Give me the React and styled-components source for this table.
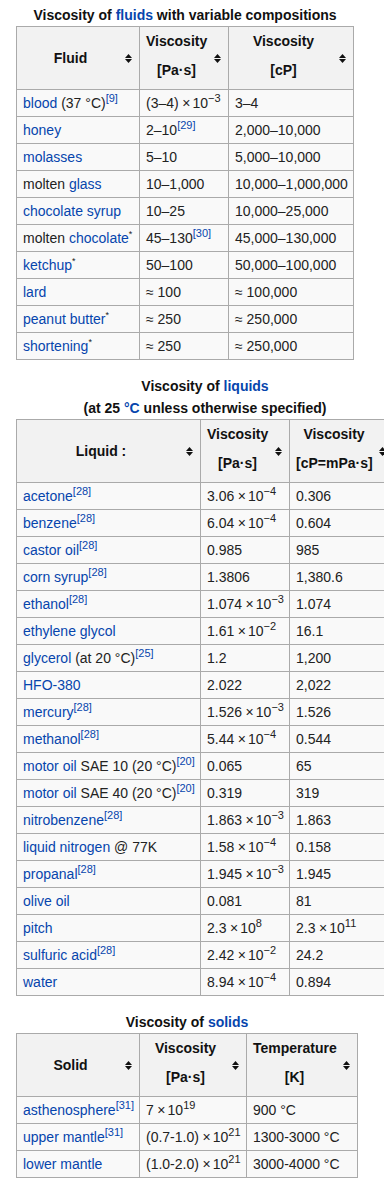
import React from "react";
import styled, { createGlobalStyle } from "styled-components";

const GlobalStyle = createGlobalStyle`
  html, body {
    margin: 0;
    padding: 0;
    overflow-x: hidden;
    background: #ffffff;
  }
  body {
    font-family: "Liberation Sans", Arial, Helvetica, sans-serif;
    font-size: 14px;
    color: #222222;
  }
`;

const Page = styled.div`
  padding: 4px 0 0 16px;
  width: 420px;
`;

const Table = styled.table`
  border-collapse: collapse;
  table-layout: fixed;
  width: ${(p) => p.$width}px;
  background: #f9f9f9;
  border: 1px solid #aaaaaa;
  margin: 0 0 15px 0;
  color: #222222;
`;

const Caption = styled.caption`
  font-weight: bold;
  line-height: 22px;
  text-align: center;
  color: #111111;
`;

const Th = styled.th`
  position: relative;
  background: #f2f2f2;
  border: 1px solid #aaaaaa;
  padding: ${(p) => (p.$multi ? "0 21px 4px 6px" : "2px 21px 2px 6px")};
  line-height: 29px;
  text-align: center;
  vertical-align: middle;
  font-weight: bold;
  color: #111111;
  white-space: nowrap;
`;

const Td = styled.td`
  border: 1px solid #aaaaaa;
  padding: 3px 6px;
  line-height: 20px;
  text-align: left;
  vertical-align: middle;
  white-space: nowrap;
`;

const Link = styled.span`
  color: #0645ad;
`;

const Ref = styled.sup`
  font-size: 11px;
  line-height: 0;
  vertical-align: super;
  color: #0645ad;
`;

const Star = styled.sup`
  font-size: 9px;
  line-height: 0;
  vertical-align: super;
  color: #222222;
`;

const Exp = styled.sup`
  font-size: 11px;
  line-height: 0;
  vertical-align: super;
`;

const Times = styled.span`
  margin-left: 0.25em;
  margin-right: 0.15em;
`;

const SortIcon = styled.svg`
  position: absolute;
  right: 7px;
  top: 50%;
  width: 7px;
  height: 9px;
  margin-top: -4px;
`;

const Sorter = () => (
  <SortIcon viewBox="0 0 7 9" aria-hidden="true">
    <polygon points="0,4 3.5,0 7,4" fill="#111" />
    <polygon points="0,5 7,5 3.5,9" fill="#111" />
  </SortIcon>
);

const Sci = ({ m, e }) => (
  <>
    {m}
    <Times>×</Times>10<Exp>{e}</Exp>
  </>
);

const Header = ({ title, unit }) => (
  <Th $multi={!!unit}>
    {title}
    {unit && (
      <>
        <br />
        {unit}
      </>
    )}
    <Sorter />
  </Th>
);

const fluids = [
  [<><Link>blood</Link> (37 °C)<Ref>[9]</Ref></>, <Sci m="(3–4)" e="−3" />, "3–4"],
  [<Link>honey</Link>, <>2–10<Ref>[29]</Ref></>, "2,000–10,000"],
  [<Link>molasses</Link>, "5–10", "5,000–10,000"],
  [<>molten <Link>glass</Link></>, "10–1,000", "10,000–1,000,000"],
  [<Link>chocolate syrup</Link>, "10–25", "10,000–25,000"],
  [<>molten <Link>chocolate</Link><Star>*</Star></>, <>45–130<Ref>[30]</Ref></>, "45,000–130,000"],
  [<><Link>ketchup</Link><Star>*</Star></>, "50–100", "50,000–100,000"],
  [<Link>lard</Link>, "≈ 100", "≈ 100,000"],
  [<><Link>peanut butter</Link><Star>*</Star></>, "≈ 250", "≈ 250,000"],
  [<><Link>shortening</Link><Star>*</Star></>, "≈ 250", "≈ 250,000"],
];

const r28 = <Ref>[28]</Ref>;

const liquids = [
  [<><Link>acetone</Link>{r28}</>, <Sci m="3.06" e="−4" />, "0.306"],
  [<><Link>benzene</Link>{r28}</>, <Sci m="6.04" e="−4" />, "0.604"],
  [<><Link>castor oil</Link>{r28}</>, "0.985", "985"],
  [<><Link>corn syrup</Link>{r28}</>, "1.3806", "1,380.6"],
  [<><Link>ethanol</Link>{r28}</>, <Sci m="1.074" e="−3" />, "1.074"],
  [<Link>ethylene glycol</Link>, <Sci m="1.61" e="−2" />, "16.1"],
  [<><Link>glycerol</Link> (at 20 °C)<Ref>[25]</Ref></>, "1.2", "1,200"],
  [<Link>HFO-380</Link>, "2.022", "2,022"],
  [<><Link>mercury</Link>{r28}</>, <Sci m="1.526" e="−3" />, "1.526"],
  [<><Link>methanol</Link>{r28}</>, <Sci m="5.44" e="−4" />, "0.544"],
  [<><Link>motor oil</Link> SAE 10 (20 °C)<Ref>[20]</Ref></>, "0.065", "65"],
  [<><Link>motor oil</Link> SAE 40 (20 °C)<Ref>[20]</Ref></>, "0.319", "319"],
  [<><Link>nitrobenzene</Link>{r28}</>, <Sci m="1.863" e="−3" />, "1.863"],
  [<><Link>liquid nitrogen</Link> @ 77K</>, <Sci m="1.58" e="−4" />, "0.158"],
  [<><Link>propanal</Link>{r28}</>, <Sci m="1.945" e="−3" />, "1.945"],
  [<Link>olive oil</Link>, "0.081", "81"],
  [<Link>pitch</Link>, <Sci m="2.3" e="8" />, <Sci m="2.3" e="11" />],
  [<><Link>sulfuric acid</Link>{r28}</>, <Sci m="2.42" e="−2" />, "24.2"],
  [<Link>water</Link>, <Sci m="8.94" e="−4" />, "0.894"],
];

const solids = [
  [<><Link>asthenosphere</Link><Ref>[31]</Ref></>, <Sci m="7" e="19" />, "900 °C"],
  [<><Link>upper mantle</Link><Ref>[31]</Ref></>, <Sci m="(0.7-1.0)" e="21" />, "1300-3000 °C"],
  [<Link>lower mantle</Link>, <Sci m="(1.0-2.0)" e="21" />, "3000-4000 °C"],
];

const DataTable = ({ width, cols, caption, headers, rows }) => (
  <Table $width={width}>
    <Caption>{caption}</Caption>
    <colgroup>
      {cols.map((w, i) => (
        <col key={i} style={{ width: w }} />
      ))}
    </colgroup>
    <thead>
      <tr>
        {headers.map(([title, unit], i) => (
          <Header key={i} title={title} unit={unit} />
        ))}
      </tr>
    </thead>
    <tbody>
      {rows.map((r, i) => (
        <tr key={i}>
          {r.map((c, j) => (
            <Td key={j}>{c}</Td>
          ))}
        </tr>
      ))}
    </tbody>
  </Table>
);

export default function App() {
  return (
    <>
      <GlobalStyle />
      <Page>
        <DataTable
          width={337}
          cols={[123, 89, 125]}
          caption={<>Viscosity of <Link>fluids</Link> with variable compositions</>}
          headers={[["Fluid"], ["Viscosity", "[Pa·s]"], ["Viscosity", "[cP]"]]}
          rows={fluids}
        />
        <DataTable
          width={377}
          cols={[184, 89, 104]}
          caption={<>Viscosity of <Link>liquids</Link><br />(at 25 <Link>°C</Link> unless otherwise specified)</>}
          headers={[["Liquid :"], ["Viscosity", "[Pa·s]"], ["Viscosity", "[cP=mPa·s]"]]}
          rows={liquids}
        />
        <DataTable
          width={341}
          cols={[123, 107, 111]}
          caption={<>Viscosity of <Link>solids</Link></>}
          headers={[["Solid"], ["Viscosity", "[Pa·s]"], ["Temperature", "[K]"]]}
          rows={solids}
        />
      </Page>
    </>
  );
}
